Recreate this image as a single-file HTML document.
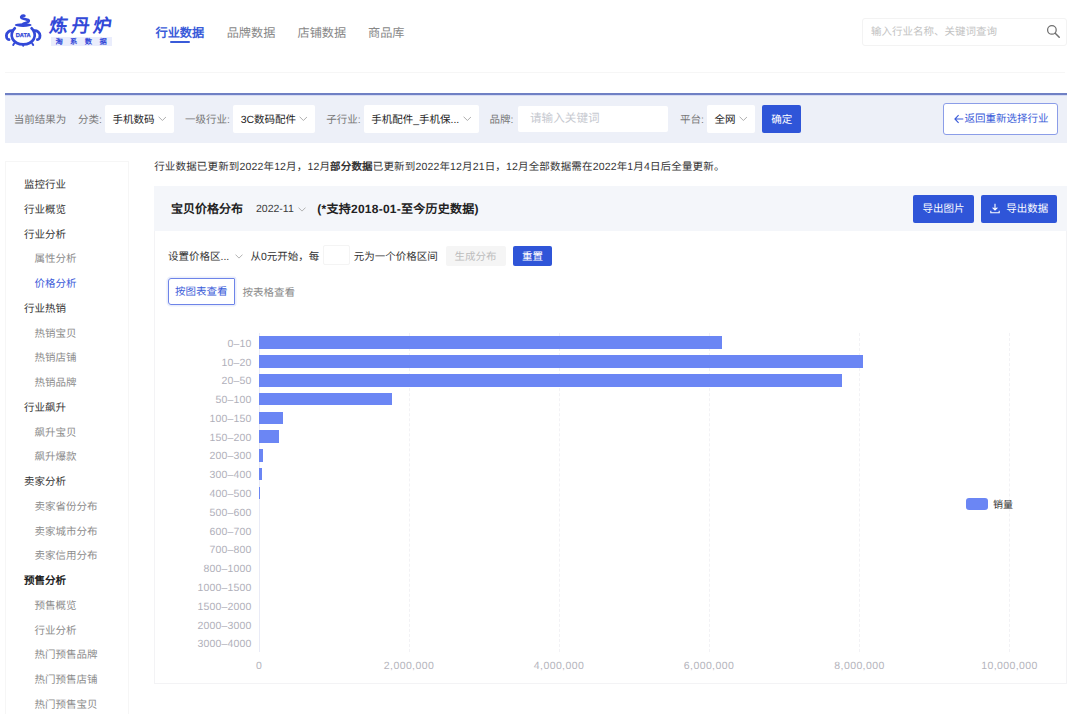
<!DOCTYPE html>
<html lang="zh-CN">
<head>
<meta charset="utf-8">
<title>炼丹炉 - 行业数据</title>
<style>
*{box-sizing:border-box;margin:0;padding:0}
html,body{width:1080px;height:714px;overflow:hidden;background:#fff}
body{position:relative;font-family:"Liberation Sans",sans-serif;font-size:10.5px;color:#333;-webkit-font-smoothing:antialiased;text-rendering:geometricPrecision}
.abs{position:absolute;white-space:nowrap}
.t{position:absolute;white-space:nowrap;line-height:14px;height:14px}
/* header */
.nav{top:24.5px;font-size:12.200px;line-height:16px;height:16px;color:#888}
.nav.on{color:#3a5bd9;font-weight:bold}
.navline{left:170px;top:41.300px;width:20px;height:2px;background:#3a5bd9;border-radius:1px}
.search{left:862px;top:18px;width:205px;height:27.5px;border:1px solid #f3f3f3;border-radius:3px;background:#fff}
.hline{left:5px;top:72px;width:1060px;height:1px;background:#f6f6f6}
/* filter bar */
.fbar{left:5px;top:93px;width:1062px;height:49.5px;background:#edf0f8}
.fline{left:5px;top:93px;width:1062px;height:2px;background:#6f80c4}
.fline2{left:5px;top:95px;width:1062px;height:1px;background:#d5dbf3}
.flabel{top:112.5px;color:#777}
.sel{top:104.5px;height:28.5px;background:#fff;border-radius:2px}
.sel span{position:absolute;left:7.5px;top:8px;line-height:14px;color:#222;white-space:nowrap}
.chev{position:absolute;top:11.5px;width:8.800px;height:5.5px}
.btn{background:#2f55d8;color:#fff;border-radius:2px;text-align:center}
/* sidebar */
.side{left:5px;top:160.5px;width:123.5px;height:560px;border:1px solid #f6f6f6;border-bottom:none;background:#fff}
.m1{left:24px;color:#333}
.m2{left:34.5px;color:#8c8c8c}
/* panel */
.panel{left:154px;top:186px;width:912.5px;height:497.5px;border:1px solid #f3f3f5;background:#fff}
.phead{left:154px;top:186px;width:912.5px;height:45px;background:#f4f6fa}
.ylab{right:828.5px;text-align:right;color:#b0b0ba;letter-spacing:.15px;font-size:10.5px}
.xlab{top:659px;color:#b4b4bc;letter-spacing:.4px;font-size:10.5px;transform:translateX(-50%)}
.bar{left:259px;height:12.6px;background:#6b86f4}
.grid{top:333px;width:0;height:319px;border-left:1px dashed #f2f2f5}
</style>
</head>
<body>

<!-- ===== logo ===== -->
<svg class="abs" style="left:0;top:10px" width="60" height="40" viewBox="0 10 60 40">
  <g fill="none" stroke="#3349d8" stroke-linecap="round" stroke-linejoin="round">
    <path d="M24.4 15.7C21.6 15.3 19.9 17.300 22.4 18.300C25.400 19.5 29.700 19.400 28.700 21.400C28 22.700 25.600 23 23.400 23.700" stroke-width="2.600"/>
    <path d="M14.800 28.300C11.800 31 10.600 35.5 12.600 39C14.600 42.600 18.5 44.400 23.200 44.400C27.900 44.400 31.800 42.600 33.800 39C35.800 35.5 34.600 31 31.600 28.300" stroke-width="2.700"/>
    <path d="M12.400 30.700C9.400 30.300 6.400 32.400 6.400 35.600C6.400 38 7.600 39.700 9 39.700" stroke-width="2.800"/>
    <path d="M34 30.700C37 30.300 40 32.400 40 35.600C40 38 38.800 39.700 37.400 39.700" stroke-width="2.800"/>
    <path d="M14.300 43.300L13.200 45M32.100 43.300L33.200 45M23.200 44.600L23.200 45.700" stroke-width="2"/>
  </g>
  <ellipse cx="23.200" cy="25.100" rx="8.400" ry="1.800" fill="#3349d8"/>
  <text x="23.200" y="37.300" text-anchor="middle" font-family="Liberation Sans,sans-serif" font-weight="bold" font-size="5.700" fill="#3349d8" stroke="#3349d8" stroke-width=".25">DATA</text>
</svg>
<div class="abs" style="left:47.5px;top:13.5px;font-size:18.200px;line-height:24px;font-weight:bold;color:#3349d8;letter-spacing:3.700px;transform:skewX(-8deg);transform-origin:0 100%">炼丹炉</div>
<div class="abs" style="left:51px;top:36.700px;width:61px;height:9.800px;background:#eaedfc"></div>
<div class="abs" style="left:55.400px;top:36.700px;font-size:7.300px;line-height:9.800px;font-weight:bold;color:#3349d8;letter-spacing:7.400px">淘系数据</div>

<!-- ===== nav ===== -->
<div class="t nav on" style="left:155.5px">行业数据</div>
<div class="abs navline"></div>
<div class="t nav" style="left:226.700px">品牌数据</div>
<div class="t nav" style="left:297.5px">店铺数据</div>
<div class="t nav" style="left:368px">商品库</div>

<!-- search -->
<div class="abs search"></div>
<div class="t" style="left:871px;top:25.300px;color:#c3c3c3">输入行业名称、关键词查询</div>
<svg class="abs" style="left:1046px;top:24px" width="15" height="15" viewBox="0 0 15 15"><circle cx="5.900" cy="5.900" r="4.300" fill="none" stroke="#707070" stroke-width="1.250"/><path d="M9.200 9.200l4 4" stroke="#707070" stroke-width="1.500" stroke-linecap="round"/></svg>
<div class="abs hline"></div>

<!-- ===== filter bar ===== -->
<div class="abs fbar"></div><div class="abs fline"></div><div class="abs fline2"></div>
<div class="t flabel" style="left:13.800px">当前结果为</div>
<div class="t flabel" style="left:78px">分类:</div>
<div class="abs sel" style="left:105px;width:69px"><span>手机数码</span><svg class="chev" style="left:52.5px" viewBox="0 0 8 5"><path d="M.5.600l3.500 3.500L7.500.600" fill="none" stroke="#adadad" stroke-width=".9"/></svg></div>
<div class="t flabel" style="left:185px">一级行业:</div>
<div class="abs sel" style="left:233.200px;width:82px"><span>3C数码配件</span><svg class="chev" style="left:65.5px" viewBox="0 0 8 5"><path d="M.5.600l3.500 3.500L7.500.600" fill="none" stroke="#adadad" stroke-width=".9"/></svg></div>
<div class="t flabel" style="left:326.200px">子行业:</div>
<div class="abs sel" style="left:363.700px;width:115px"><span>手机配件_手机保...</span><svg class="chev" style="left:99px" viewBox="0 0 8 5"><path d="M.5.600l3.500 3.500L7.500.600" fill="none" stroke="#adadad" stroke-width=".9"/></svg></div>
<div class="t flabel" style="left:489.5px">品牌:</div>
<div class="abs" style="left:518px;top:105.5px;width:150px;height:26.5px;background:#fff;border-radius:2px"></div>
<div class="t" style="left:530px;top:110.5px;font-size:11.600px;line-height:16px;height:16px;color:#c6c9d0">请输入关键词</div>
<div class="t flabel" style="left:680px">平台:</div>
<div class="abs sel" style="left:707px;width:47.5px"><span>全网</span><svg class="chev" style="left:31.700px" viewBox="0 0 8 5"><path d="M.5.600l3.500 3.500L7.500.600" fill="none" stroke="#adadad" stroke-width=".9"/></svg></div>
<div class="abs btn" style="left:762px;top:104.5px;width:39.300px;height:28.5px;line-height:30px">确定</div>
<div class="abs" style="left:943px;top:103px;width:115px;height:31.5px;border:1px solid #8b9de8;border-radius:3px;background:#fff;color:#3a5bd9;line-height:30.5px;text-align:left;padding-left:20.5px">返回重新选择行业</div>
<svg class="abs" style="left:953.5px;top:113.5px" width="10" height="10" viewBox="0 0 10 10"><path d="M9.300 5H1M4.600 1.200L.9 5l3.700 3.800" fill="none" stroke="#3a5bd9" stroke-width="1.100"/></svg>

<!-- ===== sidebar ===== -->
<div class="abs side"></div>
<div class="t m1" style="top:178px">监控行业</div>
<div class="t m1" style="top:202.700px">行业概览</div>
<div class="t m1" style="top:227.5px">行业分析</div>
<div class="t m2" style="top:252.200px">属性分析</div>
<div class="t m2" style="top:277px;color:#3a5bd9">价格分析</div>
<div class="t m1" style="top:301.700px">行业热销</div>
<div class="t m2" style="top:326.5px">热销宝贝</div>
<div class="t m2" style="top:351.200px">热销店铺</div>
<div class="t m2" style="top:376px">热销品牌</div>
<div class="t m1" style="top:400.700px">行业飙升</div>
<div class="t m2" style="top:425.5px">飙升宝贝</div>
<div class="t m2" style="top:450.200px">飙升爆款</div>
<div class="t m1" style="top:475px">卖家分析</div>
<div class="t m2" style="top:499.700px">卖家省份分布</div>
<div class="t m2" style="top:524.5px">卖家城市分布</div>
<div class="t m2" style="top:549.200px">卖家信用分布</div>
<div class="t m1" style="top:574px;font-weight:bold;color:#222">预售分析</div>
<div class="t m2" style="top:598.700px">预售概览</div>
<div class="t m2" style="top:623.5px">行业分析</div>
<div class="t m2" style="top:648.200px">热门预售品牌</div>
<div class="t m2" style="top:673px">热门预售店铺</div>
<div class="t m2" style="top:697.700px">热门预售宝贝</div>

<!-- ===== notice ===== -->
<div class="t" style="left:154.200px;top:159.600px;color:#333;letter-spacing:.16px">行业数据已更新到2022年12月，12月<b>部分数据</b>已更新到2022年12月21日，12月全部数据需在2022年1月4日后全量更新。</div>

<!-- ===== panel ===== -->
<div class="abs panel"></div>
<div class="abs phead"></div>
<div class="t" style="left:171px;top:200.5px;font-size:12px;line-height:16px;height:16px;font-weight:bold;color:#222">宝贝价格分布</div>
<div class="t" style="left:256px;top:201.5px;color:#3a3a3a;font-size:10.5px">2022-11</div>
<svg class="abs" style="left:297.5px;top:206.5px" width="8" height="5" viewBox="0 0 8 5"><path d="M.5.600l3.500 3.500L7.500.600" fill="none" stroke="#aaa" stroke-width=".9"/></svg>
<div class="t" style="left:317.300px;top:200.5px;font-size:12px;line-height:16px;height:16px;font-weight:bold;color:#222;letter-spacing:.25px">(*支持2018-01-至今历史数据)</div>
<div class="abs btn" style="left:913.200px;top:195px;width:60.5px;height:27.5px;line-height:29.5px">导出图片</div>
<div class="abs btn" style="left:980.800px;top:195px;width:76.300px;height:27.5px;line-height:29.5px;text-align:left;padding-left:25.5px">导出数据</div>
<svg class="abs" style="left:990px;top:203px" width="10" height="11" viewBox="0 0 10 11"><path d="M5 .8v6M2.600 4.700L5 7l2.400-2.300M.8 7.800v1.900h8.400V7.800" fill="none" stroke="#fff" stroke-width="1.100"/></svg>

<!-- controls -->
<div class="t" style="left:168px;top:250px;color:#333">设置价格区...</div>
<svg class="abs" style="left:234.5px;top:254px" width="8" height="5" viewBox="0 0 8 5"><path d="M.5.600l3.500 3.500L7.500.600" fill="none" stroke="#aaa" stroke-width=".9"/></svg>
<div class="t" style="left:250.5px;top:250px;color:#333">从0元开始，每</div>
<div class="abs" style="left:323px;top:245px;width:26.5px;height:19.5px;border:1px solid #f4f4f4;border-radius:2px"></div>
<div class="t" style="left:353.700px;top:250px;color:#333">元为一个价格区间</div>
<div class="abs" style="left:445.5px;top:245.5px;width:60px;height:20.5px;line-height:22px;background:#f5f5f5;color:#bdbdbd;border-radius:2px;text-align:center">生成分布</div>
<div class="abs btn" style="left:513px;top:245.5px;width:39px;height:20.5px;line-height:22px;font-weight:500">重置</div>

<div class="abs" style="left:167.5px;top:277.5px;width:67.5px;height:27.5px;border:1px solid #6e84e8;border-radius:3px 1px 1px 3px;color:#3a5bd9;line-height:27.5px;text-align:center;box-shadow:0 0 0 1.5px rgba(47,85,216,.10)">按图表查看</div>
<div class="t" style="left:242.5px;top:285.800px;color:#888">按表格查看</div>

<!-- ===== chart ===== -->
<div id="chart">
<div class="abs grid" style="left:408.5px"></div>
<div class="abs grid" style="left:558.5px"></div>
<div class="abs grid" style="left:708.5px"></div>
<div class="abs grid" style="left:859.0px"></div>
<div class="abs grid" style="left:1009.0px"></div>
<div class="abs" style="left:258.5px;top:333px;width:1px;height:319px;background:#e9ebf6"></div>
<div class="abs bar" style="top:336.4px;width:463.0px"></div>
<div class="t ylab" style="top:336.7px">0–10</div>
<div class="abs bar" style="top:355.2px;width:604.0px"></div>
<div class="t ylab" style="top:355.5px">10–20</div>
<div class="abs bar" style="top:374.0px;width:583.3px"></div>
<div class="t ylab" style="top:374.3px">20–50</div>
<div class="abs bar" style="top:392.8px;width:133.3px"></div>
<div class="t ylab" style="top:393.1px">50–100</div>
<div class="abs bar" style="top:411.6px;width:24.4px"></div>
<div class="t ylab" style="top:411.9px">100–150</div>
<div class="abs bar" style="top:430.3px;width:19.6px"></div>
<div class="t ylab" style="top:430.6px">150–200</div>
<div class="abs bar" style="top:449.1px;width:4.2px"></div>
<div class="t ylab" style="top:449.4px">200–300</div>
<div class="abs bar" style="top:467.9px;width:3.2px"></div>
<div class="t ylab" style="top:468.2px">300–400</div>
<div class="abs bar" style="top:486.7px;width:1.4px"></div>
<div class="t ylab" style="top:487.0px">400–500</div>
<div class="t ylab" style="top:505.8px">500–600</div>
<div class="t ylab" style="top:524.6px">600–700</div>
<div class="t ylab" style="top:543.4px">700–800</div>
<div class="t ylab" style="top:562.2px">800–1000</div>
<div class="t ylab" style="top:581.0px">1000–1500</div>
<div class="t ylab" style="top:599.8px">1500–2000</div>
<div class="t ylab" style="top:618.5px">2000–3000</div>
<div class="t ylab" style="top:637.3px">3000–4000</div>
<div class="t xlab" style="left:259px">0</div>
<div class="t xlab" style="left:409px">2,000,000</div>
<div class="t xlab" style="left:559px">4,000,000</div>
<div class="t xlab" style="left:709px">6,000,000</div>
<div class="t xlab" style="left:859.5px">8,000,000</div>
<div class="t xlab" style="left:1009.5px">10,000,000</div>
<div class="abs" style="left:966px;top:498px;width:21.5px;height:12px;border-radius:3px;background:#6b86f4"></div>
<div class="t" style="left:993px;top:498.600px;font-size:10px;color:#333">销量</div>
</div>

</body>
</html>
